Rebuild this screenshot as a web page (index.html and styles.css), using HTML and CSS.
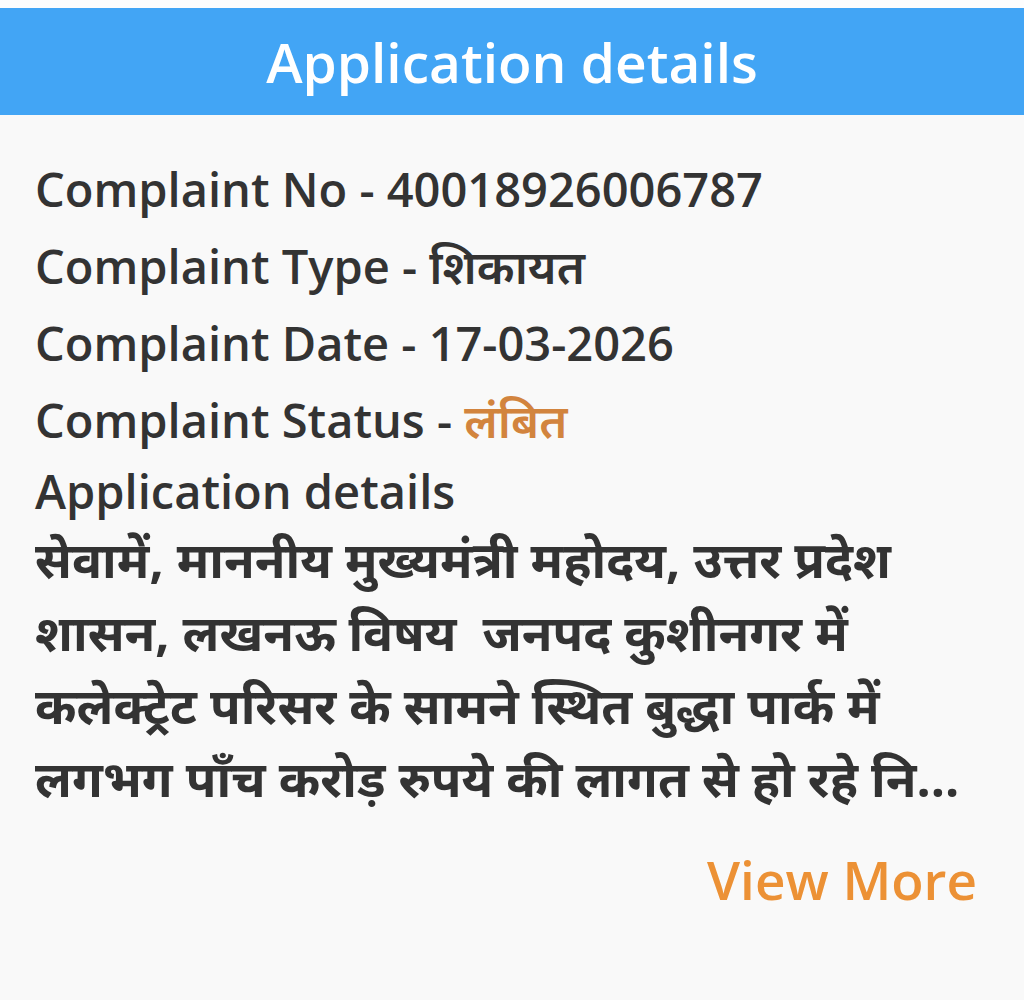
FILE: index.html
```html
<!DOCTYPE html>
<html lang="hi">
<head>
  <meta charset="UTF-8" />
  <meta name="viewport" content="width=device-width, initial-scale=1" />
  <title>Application details</title>
  <link rel="stylesheet" href="styles.css">
</head>
<body>
  <div class="top-strip"></div>
  <header class="app-bar">Application details</header>

  <main class="details">
    <div class="row">Complaint No - 40018926006787</div>
    <div class="row">Complaint Type - <span class="hi">शिकायत</span></div>
    <div class="row">Complaint Date - 17-03-2026</div>
    <div class="row">Complaint Status - <span class="hi status">लंबित</span></div>
    <div class="row label">Application details</div>
    <p class="body-text">सेवामें, माननीय मुख्यमंत्री महोदय, उत्तर प्रदेश शासन, लखनऊ विषय&nbsp; जनपद कुशीनगर में कलेक्ट्रेट परिसर के सामने स्थित बुद्धा पार्क में लगभग पाँच करोड़ रुपये की लागत से हो रहे नि...</p>
    <div class="more-row">
      <a class="view-more">View More</a>
    </div>
  </main>
</body>
</html>
```

FILE: styles.css
```css
body {
  margin: 0;
  background: #f9f9f9;
  font-family: "Open Sans", "Noto Sans", sans-serif;
  color: #333;
}
.top-strip {
  height: 8px;
  background: #fdfdfd;
}
.app-bar {
  height: 107px;
  background: #42a5f5;
  color: #fff;
  font-size: 55px;
  font-weight: 600;
  display: flex;
  align-items: center;
  justify-content: center;
}
.details {
  padding: 36px 35px 0 35px;
}
.row {
  font-size: 47px;
  font-weight: 600;
  line-height: 77px;
  white-space: nowrap;
}
.hi {
  font-weight: 600;
}
.status {
  color: #d2843e;
}
.label {
  line-height: 64px;
}
.body-text {
  margin: 0;
  font-size: 50px;
  font-weight: 700;
  line-height: 73px;
}
.more-row {
  display: flex;
  justify-content: flex-end;
  padding: 28px 12px 0 0;
}
.view-more {
  color: #ec9135;
  font-size: 53px;
  font-weight: 600;
  cursor: pointer;
}
```
